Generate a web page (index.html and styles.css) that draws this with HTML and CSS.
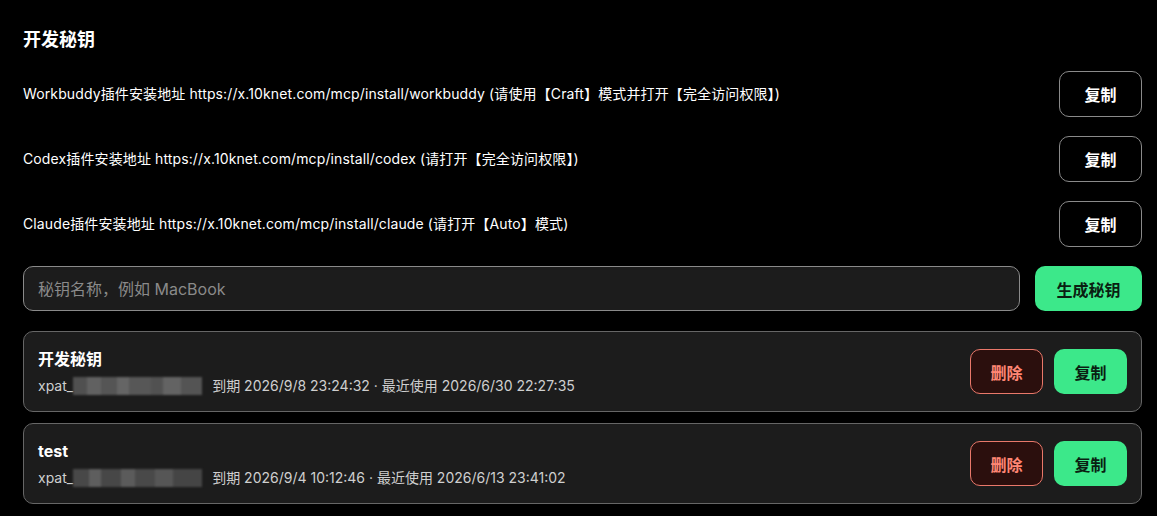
FILE: index.html
```html
<!DOCTYPE html>
<html lang="zh-CN">
<head>
  <meta charset="UTF-8">
  <meta name="viewport" content="width=device-width, initial-scale=1.0">
  <title>开发秘钥</title>
  <link rel="stylesheet" href="styles.css">
</head>
<body>
  <div class="panel">
    <h2 class="panel-title">开发秘钥</h2>

    <div class="install-list">
      <div class="install-row">
        <p>Workbuddy插件安装地址 https://x.10knet.com/mcp/install/workbuddy (请使用【Craft】模式并打开【完全访问权限】)</p>
        <button class="btn btn-outline">复制</button>
      </div>
      <div class="install-row">
        <p>Codex插件安装地址 https://x.10knet.com/mcp/install/codex (请打开【完全访问权限】)</p>
        <button class="btn btn-outline">复制</button>
      </div>
      <div class="install-row">
        <p>Claude插件安装地址 https://x.10knet.com/mcp/install/claude (请打开【Auto】模式)</p>
        <button class="btn btn-outline">复制</button>
      </div>
    </div>

    <div class="create-row">
      <input class="key-input" type="text" placeholder="秘钥名称，例如 MacBook">
      <button class="btn btn-green btn-create">生成秘钥</button>
    </div>

    <div class="key-list">
      <div class="key-card">
        <div class="key-info">
          <div class="key-name">开发秘钥</div>
          <div class="key-meta">xpat_<span class="mosaic"></span>到期 2026/9/8 23:24:32 · 最近使用 2026/6/30 22:27:35</div>
        </div>
        <div class="key-actions">
          <button class="btn btn-danger">删除</button>
          <button class="btn btn-green">复制</button>
        </div>
      </div>
      <div class="key-card">
        <div class="key-info">
          <div class="key-name">test</div>
          <div class="key-meta">xpat_<span class="mosaic mosaic-b"></span>到期 2026/9/4 10:12:46 · 最近使用 2026/6/13 23:41:02</div>
        </div>
        <div class="key-actions">
          <button class="btn btn-danger">删除</button>
          <button class="btn btn-green">复制</button>
        </div>
      </div>
    </div>
  </div>
</body>
</html>
```

FILE: styles.css
```css
* {
  margin: 0;
  padding: 0;
  box-sizing: border-box;
}
body {
  background: #000;
  color: #fff;
  font-family: "Inter", "Noto Sans CJK SC", sans-serif;
}
.panel {
  padding: 26px 15px 0 23px;
}
.panel-title {
  font-size: 18px;
  font-weight: 700;
  line-height: 28px;
  margin-bottom: 17px;
}
.install-list {
  display: flex;
  flex-direction: column;
  gap: 19px;
}
.install-row {
  display: flex;
  align-items: center;
  justify-content: space-between;
}
.install-row p {
  font-size: 14px;
  line-height: 20px;
  letter-spacing: 0.12px;
}
.btn {
  font-family: "Inter", "Noto Sans CJK SC", sans-serif;
  font-size: 16px;
  font-weight: 700;
  border-radius: 10px;
  cursor: pointer;
}
.btn-outline {
  width: 83px;
  height: 46px;
  background: #000;
  color: #fff;
  border: 1px solid #8a8a8a;
}
.btn-green {
  width: 73px;
  height: 45px;
  background: #3ce88a;
  color: #0a1f12;
  border: none;
}
.btn-danger {
  width: 73px;
  height: 45px;
  background: #2b0f0d;
  color: #ff8674;
  border: 1px solid #e9786a;
}
.create-row {
  display: flex;
  gap: 15px;
  margin-top: 19px;
}
.key-input {
  flex: 1;
  height: 45px;
  background: #1c1c1c;
  border: 1px solid #8a8a8a;
  border-radius: 10px;
  padding: 0 14px;
  font-family: "Inter", "Noto Sans CJK SC", sans-serif;
  font-size: 16px;
  color: #fff;
}
.key-input::placeholder {
  color: #8a8a8a;
}
.btn-create {
  width: 107px;
}
.key-list {
  display: flex;
  flex-direction: column;
  gap: 11px;
  margin-top: 20px;
}
.key-card {
  display: flex;
  align-items: center;
  justify-content: space-between;
  height: 81px;
  background: #1c1c1c;
  border: 1px solid #666;
  border-radius: 10px;
  padding: 0 14px;
}
.key-name {
  font-size: 16px;
  font-weight: 700;
  line-height: 22px;
}
.key-meta {
  font-size: 14px;
  line-height: 20px;
  color: #cfcfcf;
  margin-top: 6px;
  display: flex;
  align-items: center;
}
.mosaic {
  display: inline-block;
  width: 129px;
  height: 18px;
  margin: 0 10px 0 0;
  filter: blur(1px);
  background:
    linear-gradient(90deg, #5a5a5a 0 14px, #6e6e6e 14px 28px, #5f5f5f 28px 44px, #727272 44px 56px, #626262 56px 78px, #5b5b5b 78px 90px, #707070 90px 108px, #5e5e5e 108px 129px);
  opacity: 0.85;
}
.mosaic-b {
  background:
    linear-gradient(90deg, #505050 0 16px, #6a6a6a 16px 28px, #4f4f4f 28px 48px, #676767 48px 62px, #525252 62px 82px, #616161 82px 100px, #4d4d4d 100px 129px);
}
.key-actions {
  display: flex;
  gap: 11px;
}
```
